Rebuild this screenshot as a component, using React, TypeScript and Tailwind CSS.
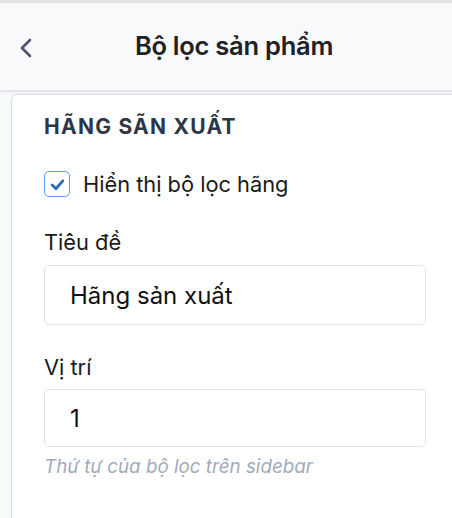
import { useState } from 'react'

export default function App() {
  const [showBrand, setShowBrand] = useState(true)
  const [title, setTitle] = useState('Hãng sản xuất')
  const [position, setPosition] = useState('1')

  return (
    <div
      className="min-h-[518px] bg-[#f8f9fb] border-t-[3px] border-[#e1e2e4]"
      style={{ fontFamily: 'Inter, "Noto Sans", sans-serif' }}
    >
      {/* header */}
      <div className="relative h-[89px] flex items-center justify-center border-b-2 border-[#e4e6ea] shadow-[0_1px_2px_rgba(0,0,0,0.04)]">
        <button className="absolute left-[17px] top-[33px] text-[#4a5568]">
          <svg width="18" height="24" viewBox="0 0 18 24" fill="none">
            <path
              d="M13 4L5 12L13 20"
              stroke="currentColor"
              strokeWidth="2.6"
              strokeLinecap="round"
              strokeLinejoin="round"
            />
          </svg>
        </button>
        <h1 className="ml-[16px] text-[25.5px] font-semibold text-[#202124] tracking-[-0.01em]">
          Bộ lọc sản phẩm
        </h1>
      </div>

      {/* content */}
      <div className="pl-[11px] pt-[2px]">
        <div className="bg-white border-l border-t border-[#d5dbe3] rounded-tl-[6px] pl-[32px] pr-[26px] pt-[18px] pb-[40px]">
          <h2 className="text-[21px] leading-[28px] font-bold tracking-[0.06em] text-[#2d3748]">
            HÃNG SÃN XUẤT
          </h2>

          <label className="mt-[29px] flex items-center gap-[13px] cursor-pointer">
            <span
              onClick={() => setShowBrand(!showBrand)}
              className="w-[26px] h-[26px] rounded-[5px] border-[1.5px] border-[#5a9cf0] flex items-center justify-center bg-white"
            >
              {showBrand && (
                <svg width="17" height="17" viewBox="0 0 16 16" fill="none">
                  <path
                    d="M3 8.5L6.5 12L13 4.5"
                    stroke="#2c6bb5"
                    strokeWidth="2.6"
                    strokeLinecap="round"
                    strokeLinejoin="round"
                  />
                </svg>
              )}
            </span>
            <span className="text-[21.8px] leading-[28px] text-[#1a1a1a]">Hiển thị bộ lọc hãng</span>
          </label>

          <div className="mt-[30px]">
            <div className="text-[21.8px] leading-[28px] text-[#1a1a1a]">Tiêu đề</div>
            <input
              value={title}
              onChange={(e) => setTitle(e.target.value)}
              className="mt-[9px] w-full h-[60px] rounded-[5px] border border-[#dfe3e8] px-[25px] text-[24px] text-[#111] outline-none"
            />
          </div>

          <div className="mt-[28px]">
            <div className="text-[21.8px] leading-[28px] text-[#1a1a1a]">Vị trí</div>
            <input
              value={position}
              onChange={(e) => setPosition(e.target.value)}
              className="mt-[8px] w-full h-[58px] rounded-[5px] border border-[#dfe3e8] px-[25px] text-[24px] text-[#111] outline-none"
            />
            <p className="mt-[6px] text-[18.8px] italic text-[#a0abbb]">
              Thứ tự của bộ lọc trên sidebar
            </p>
          </div>
        </div>
      </div>
    </div>
  )
}
